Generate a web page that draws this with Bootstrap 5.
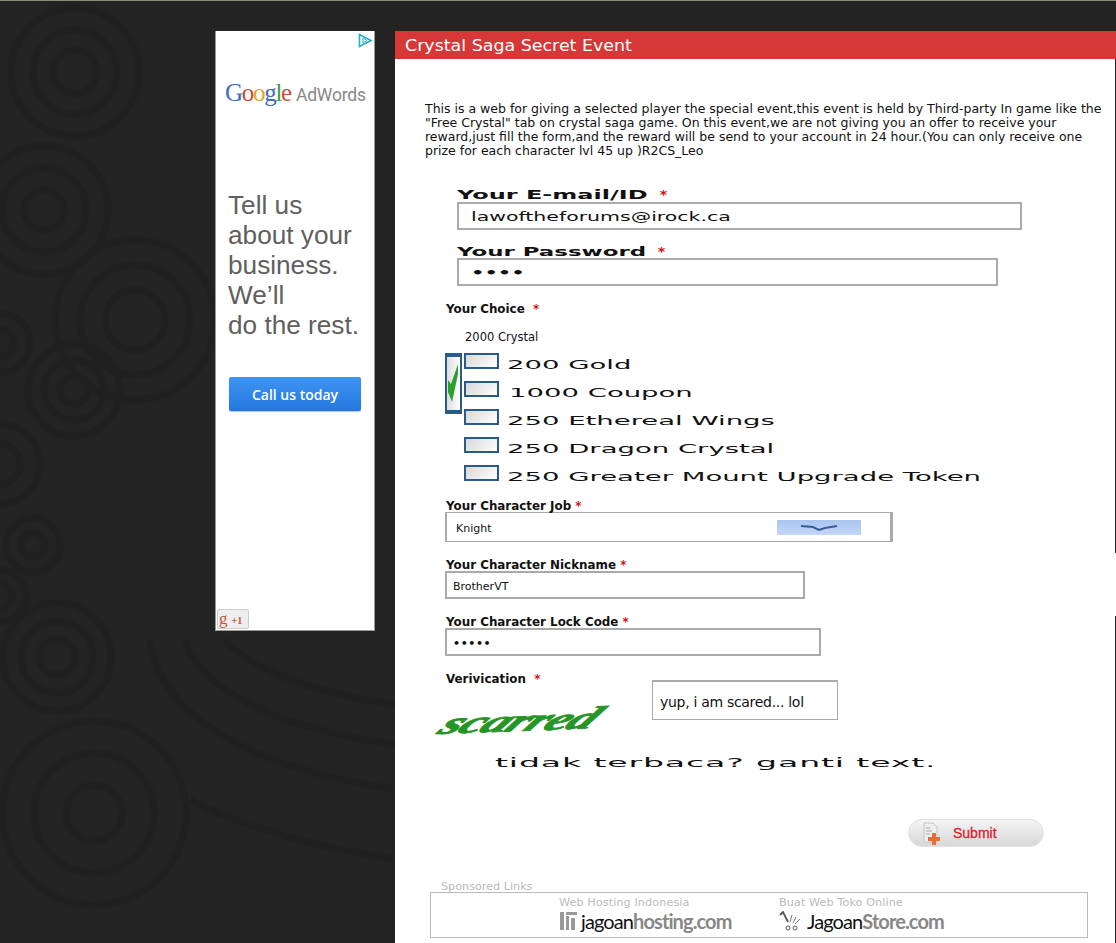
<!DOCTYPE html>
<html lang="en">
<head>
<meta charset="utf-8">
<title>Crystal Saga Secret Event</title>
<link href="https://cdn.jsdelivr.net/npm/bootstrap@5.3.0/dist/css/bootstrap.min.css" rel="stylesheet">
<style>
html,body{height:943px;overflow:hidden}
body{background:#232323;font-family:"DejaVu Sans",sans-serif;font-size:11px;color:#111;border-top:1px solid #8a8a7a}
.rings{position:absolute;left:0;top:0;width:400px;height:943px}
.rings circle,.rings path{fill:none;stroke:#202020;stroke-width:7}
.page{position:relative;padding:30px 0 0 215px;gap:20px;height:943px}
.adbox{width:160px;height:600px;background:#fff;border-left:1px solid #999;border-right:1px solid #999;border-bottom:1px solid #999;position:relative;font-family:"Liberation Sans",sans-serif}
.adchoice{position:absolute;right:1px;top:2px}
.glogo{padding:48px 0 0 9px;height:159px;font-size:25px;line-height:28px;letter-spacing:-1.3px;font-family:"Liberation Serif",serif;white-space:nowrap}
.g1{color:#3f6bc4}.g2{color:#d04a3a}.g3{color:#dba821}.g4{color:#3f9c4c}
.adwords{font-family:"Roboto",sans-serif;font-size:17.5px;letter-spacing:-.2px;color:#888;margin-left:1px}
.adtext{margin:0 0 0 12px;font-size:26.2px;line-height:30px;color:#5f5f5f;white-space:nowrap}
.adcall{display:block;width:132px;height:34px;margin:37px 0 0 13px;padding:0;border:0;border-radius:2px;background:linear-gradient(#3e94f2,#2477df);color:#fff;font:600 14px/36px "Open Sans",sans-serif;text-align:center;box-shadow:0 1px 1px #aac8ee}
.plusone{position:absolute;left:1px;bottom:1px;width:32px;height:20px;background:#eee;border:1px solid #ccc;border-radius:2px;color:#c8543f;font:bold 10px/18px "Liberation Serif",serif;white-space:nowrap;padding-left:1px}
.plusone b{font-size:17px;font-weight:400;margin-right:4px}
.panel-main{width:721px;height:912px;background:#fff;position:relative}
.edge{position:absolute;right:0;width:1px;background:#222}
.edge1{top:28px;height:494px}
.edge2{top:585px;height:327px}
.headbar{height:28px;background:#d63737;color:#fff;font-size:15.5px;line-height:30px;padding-left:10px}
.headtxt{display:inline-block;transform:scaleX(1.125);transform-origin:left}
.intro{margin:43px 0 0 30px;width:685px;font-size:12.5px;line-height:14px;color:#111}
.wide{display:inline-block;transform-origin:left center;white-space:nowrap}
.wrow{display:flex;height:14px;line-height:16px;margin-left:62px}
.wrow .req{transform:scaleX(1.1);font-size:13px}
.wl{font-weight:700;font-size:12.5px;flex:none;color:#111}
.wl-mail{transform:scaleX(1.92);width:203px}
.wl-pass{transform:scaleX(1.83);width:201px}
.m-mail{margin-top:29px;margin-bottom:1px}
.m-pass{margin-top:14px}
.req{color:#d01515;font-weight:700}
.flab{font-weight:700;font-size:11.9px;line-height:16px;height:14px;color:#111;white-space:nowrap;margin-left:51px;margin-top:15px}
.fbox{background:#fff;border:2px solid #aaa;display:block;font-size:11px;line-height:27px;color:#111;height:28px}
.f1{margin:0 0 0 62px;padding-left:12px}
.r1{width:565px}
.r2{width:541px}
.r1 .wide{transform:scaleX(1.78);font-size:11.5px}
.r2 .wide{transform:scaleX(1.75);font-size:12px;font-weight:700}
.r-plain{margin-left:50px;padding-left:6px}
.r3{width:360px}
.r4{width:376px;font-weight:700;letter-spacing:.6px}
.crystal{margin:14px 0 0 70px;line-height:16px;height:14px;font-size:11.5px}
.opts{position:relative;margin:10px 0 0 50px}
.bigcheck{position:absolute;left:0;top:0;width:17px;height:61px;border:solid #2a5a86;border-width:4px 2px;background:linear-gradient(90deg,#ddd,#fff);overflow:hidden}
.opt{height:28px;padding-left:19px;gap:8px;align-items:flex-start}
.cbx{width:35px;height:16px;flex:none;border:2px solid #2a5a86;background:linear-gradient(135deg,#d8d8d8,#fff)}
.opttxt{font-size:11.5px;line-height:14px;height:14px;transform:scaleX(2.39);margin-top:5px}
.opttxt-b{margin-left:2px}
.m-job{margin-top:5px}
.selbox{width:448px;height:30px;margin-left:50px;padding-left:9px;border-width:1px 3px 1px 2px}
.seltxt{padding-top:2px}
.selarrow{margin-right:29px}
.capline{height:70px;margin-left:47px}
.capcell{width:210px;padding:22px 0 0 3px}
.cap{font-family:"Liberation Serif",serif;font-style:italic;font-weight:700;color:#259525;-webkit-text-stroke:.9px #259525;font-size:32px;line-height:32px;transform:scaleX(1.62) skewX(-30deg) rotate(-3.5deg);transform-origin:left center;display:inline-block;letter-spacing:-1px}
.capbox{width:186px;height:40px;line-height:40px;padding-left:7px;font-size:14px;letter-spacing:-.3px;border-width:2px 1px 1px 1px;margin-top:-5px}
.trow{margin-left:100px;height:14px;line-height:16px}
.trow .wide{transform:scaleX(2.88);font-size:11.5px;letter-spacing:.3px}
.submit{width:136px;height:28px;border-radius:14px;background:linear-gradient(#f4f4f4,#d8d8d8);border:1px solid #e2e2e2;color:#d6232f;font:400 14px/25px "Liberation Sans",sans-serif;-webkit-text-stroke:.3px #d6232f;margin:50px 0 0 513px;padding:0 0 0 44px;text-align:left;position:relative;display:block}
.subic{position:absolute;left:13px;top:2px}
.spon{color:#bbb;font-size:11.2px;line-height:14px;height:12px;margin:33px 0 0 46px}
.sponbox{margin-left:35px;width:658px;height:46px;border:1px solid #bbb;padding-left:128px;display:flex}
.spcol{width:220px;flex:none}
.sp{color:#bbb;font-size:11.2px;line-height:12px;padding-top:4px;white-space:nowrap;letter-spacing:.1px}
.lg{font-family:"Lato",sans-serif;font-weight:700;font-size:20px;line-height:24px;letter-spacing:-.9px;color:#888;white-space:nowrap;display:flex;align-items:center;gap:3px}
.lg em{font-style:normal;font-weight:400;color:#111}
</style>
</head>
<body>
<svg class="rings" viewBox="0 0 400 943" aria-hidden="true">
<circle cx="75" cy="72" r="22"/><circle cx="75" cy="72" r="42"/><circle cx="75" cy="72" r="64"/>
<circle cx="44" cy="210" r="20"/><circle cx="44" cy="210" r="42"/><circle cx="44" cy="210" r="64"/>
<circle cx="135" cy="320" r="30"/><circle cx="135" cy="320" r="55"/><circle cx="135" cy="320" r="80"/>
<circle cx="0" cy="343" r="14"/><circle cx="0" cy="343" r="30"/>
<circle cx="74" cy="390" r="14"/><circle cx="74" cy="390" r="30"/><circle cx="74" cy="390" r="46"/>
<circle cx="0" cy="464" r="20"/><circle cx="0" cy="464" r="40"/>
<circle cx="33" cy="545" r="12"/><circle cx="33" cy="545" r="27"/>
<circle cx="0" cy="596" r="12"/><circle cx="0" cy="596" r="26"/>
<circle cx="57" cy="657" r="18"/><circle cx="57" cy="657" r="36"/><circle cx="57" cy="657" r="54"/>
<circle cx="94" cy="813" r="28"/><circle cx="94" cy="813" r="60"/><circle cx="94" cy="813" r="92"/>
<path d="M150 640C160 720 260 770 400 790"/><path d="M185 640C200 690 280 730 400 745"/><path d="M225 640C250 670 320 695 400 705"/><path d="M190 800C250 830 330 850 400 860"/>
</svg>
<div class="page d-flex align-items-start">
  <aside class="adbox">
    <svg class="adchoice" width="15" height="15" viewBox="0 0 15 15"><path d="M1.500 1.500v12L13 7.500z" fill="none" stroke="#1fb0c8" stroke-width="1.600"/><path d="M5 5v5l4-2.500z" fill="none" stroke="#1fb0c8"/></svg>
    <div class="glogo"><span class="g1">G</span><span class="g2">o</span><span class="g3">o</span><span class="g1">g</span><span class="g4">l</span><span class="g2">e</span><span class="adwords"> AdWords</span></div>
    <p class="adtext">Tell us<br>about your<br>business.<br>We’ll<br>do the rest.</p>
    <button type="button" class="adcall">Call us today</button>
    <div class="plusone"><b>g</b>+1</div>
  </aside>
  <main class="panel-main">
    <div class="edge edge1"></div>
    <div class="edge edge2"></div>
    <div class="headbar"><span class="headtxt">Crystal Saga Secret Event</span></div>
    <p class="intro mb-0">This is a web for giving a selected player the special event,this event is held by Third-party In game like the "Free Crystal" tab on crystal saga game. On this event,we are not giving you an offer to receive your reward,just fill the form,and the reward will be send to your account in 24 hour.(You can only receive one prize for each character lvl 45 up )R2CS_Leo</p>
    <form>
      <div class="wrow m-mail"><span class="wide wl wl-mail">Your E-mail/ID</span><span class="req">*</span></div>
      <div class="fbox f1 r1"><span class="wide">lawoftheforums@irock.ca</span></div>
      <div class="wrow m-pass"><span class="wide wl wl-pass">Your Password</span><span class="req">*</span></div>
      <div class="fbox f1 r2"><span class="wide">••••</span></div>
      <div class="flab">Your Choice&nbsp; <span class="req">*</span></div>
      <div class="crystal">2000 Crystal</div>
      <div class="opts">
        <div class="bigcheck"><svg width="13" height="53" viewBox="0 0 13 53"><path d="M1 23l3 4 7-20v10L5 45 1 35z" fill="#2ca02c"/></svg></div>
        <div class="opt d-flex"><span class="cbx"></span><span class="wide opttxt">200 Gold</span></div>
        <div class="opt d-flex"><span class="cbx"></span><span class="wide opttxt opttxt-b">1000 Coupon</span></div>
        <div class="opt d-flex"><span class="cbx"></span><span class="wide opttxt">250 Ethereal Wings</span></div>
        <div class="opt d-flex"><span class="cbx"></span><span class="wide opttxt">250 Dragon Crystal</span></div>
        <div class="opt d-flex"><span class="cbx"></span><span class="wide opttxt">250 Greater Mount Upgrade Token</span></div>
      </div>
      <div class="flab m-job">Your Character Job <span class="req">*</span></div>
      <div class="fbox selbox d-flex align-items-center">
        <span class="flex-grow-1 seltxt">Knight</span>
        <svg class="selarrow" width="84" height="15" viewBox="0 0 84 15"><defs><linearGradient id="dd" x1="0" y1="0" x2="0" y2="1"><stop offset="0" stop-color="#a9c4f0"/><stop offset="1" stop-color="#c4d7f6"/></linearGradient></defs><rect width="84" height="15" fill="url(#dd)"/><path d="M24 6l12 1 6 3 6-2 12-2" fill="none" stroke="#3a5a98" stroke-width="2"/></svg>
      </div>
      <div class="flab">Your Character Nickname <span class="req">*</span></div>
      <div class="fbox r-plain r3">BrotherVT</div>
      <div class="flab">Your Character Lock Code <span class="req">*</span></div>
      <div class="fbox r-plain r4">•••••</div>
      <div class="flab">Verivication&nbsp; <span class="req">*</span></div>
      <div class="d-flex capline">
        <div class="capcell"><span class="cap">scarred</span></div>
        <div class="fbox capbox">yup, i am scared... lol</div>
      </div>
      <div class="trow"><span class="wide">tidak terbaca? ganti text.</span></div>
      <button type="button" class="submit">
        <svg class="subic" width="22" height="24" viewBox="0 0 22 24"><path d="M2 1h9l4 4v15H2z" fill="#eee" stroke="#c4c4c4"/><path d="M4 6h4M4 9h6M4 12h4" stroke="#aaa"/><path d="M10 11h4v4h4v4h-4v4h-4v-4H6v-4h4z" fill="#e0703a"/></svg>Submit
      </button>
      <div class="spon">Sponsored Links</div>
      <div class="sponbox">
        <div class="spcol"><div class="sp">Web Hosting Indonesia</div><div class="lg"><svg width="19" height="20" viewBox="0 0 19 20"><path d="M1 1h4v18H1zM7 1h11v3H7zM7 5h3v14H7zM12 7h4v12h-4z" fill="#999"/></svg><span><em>jagoan</em>hosting.com</span></div></div>
        <div class="spcol"><div class="sp">Buat Web Toko Online</div><div class="lg"><svg width="25" height="20" viewBox="0 0 25 20"><path d="M1 4l3-3 5 10" fill="none" stroke="#555" stroke-width="1.800"/><path d="M13 4l-2 7M17 6l-3 6M21 8l-5 5" fill="none" stroke="#777"/><circle cx="9" cy="17" r="2" fill="none" stroke="#555"/><circle cx="16" cy="17" r="2" fill="none" stroke="#555"/></svg><span><em>Jagoan</em>Store.com</span></div></div>
      </div>
    </form>
  </main>
</div>
</body>
</html>
